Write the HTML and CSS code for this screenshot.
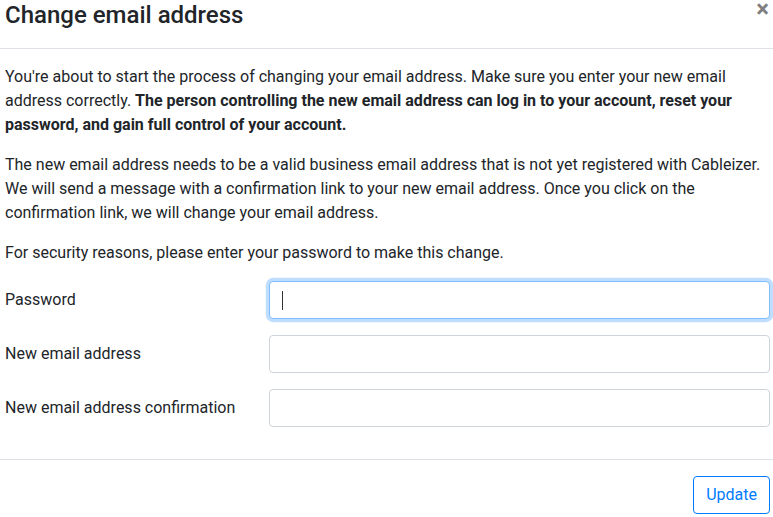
FILE: index.html
```html
<!DOCTYPE html>
<html lang="en">
<head>
<meta charset="utf-8">
<title>Change email address</title>
<link rel="stylesheet" href="styles.css">
</head>
<body>
<div class="modal">
  <div class="modal-header">
    <h4 class="modal-title">Change email address</h4>
    <button class="close" type="button" aria-label="Close">×</button>
  </div>
  <div class="modal-body">
    <p>You're about to start the process of changing your email address. Make sure you enter your new email address correctly. <strong>The person controlling the new email address can log in to your account, reset your password, and gain full control of your account.</strong></p>
    <p>The new email address needs to be a valid business email address that is not yet registered with Cableizer. We will send a message with a confirmation link to your new email address. Once you click on the confirmation link, we will change your email address.</p>
    <p>For security reasons, please enter your password to make this change.</p>
    <div class="form-row">
      <label class="form-label" for="pw">Password</label>
      <div class="field focused"><input class="form-control" id="pw" type="password"></div>
    </div>
    <div class="form-row">
      <label class="form-label" for="em">New email address</label>
      <div class="field"><input class="form-control" id="em" type="email"></div>
    </div>
    <div class="form-row">
      <label class="form-label" for="em2">New email address confirmation</label>
      <div class="field"><input class="form-control" id="em2" type="email"></div>
    </div>
  </div>
  <div class="modal-footer">
    <button class="btn-outline" type="button">Update</button>
  </div>
</div>
</body>
</html>
```
FILE: styles.css
```css
* { box-sizing: border-box; }
html, body { margin: 0; padding: 0; background: #fff; }
body {
  font-family: Roboto, "Liberation Sans", Arial, sans-serif;
  font-size: 16px;
  line-height: 24px;
  color: #212529;
  overflow: hidden;
}
.modal { width: 773px; }
.modal-header {
  height: 49px;
  display: flex;
  align-items: flex-start;
  padding: 0 3px 0 5px;
  border-bottom: 1px solid #dee2e6;
}
.modal-title {
  margin: 1px 0 0 0;
  font-size: 24px;
  font-weight: 500;
  line-height: 28.8px;
  color: #212529;
}
.close {
  margin-left: auto;
  margin-top: 0;
  margin-right: 1px;
  padding: 0;
  height: 18px;
  border: 0;
  background: transparent;
  font-family: Roboto, "Liberation Sans", Arial, sans-serif;
  font-size: 24px;
  font-weight: 700;
  line-height: 18px;
  color: #000;
  opacity: .5;
  cursor: pointer;
}
.modal-body { padding: 16px 3px 16px 5px; }
.modal-body p { margin: 0 0 16px 0; }
.form-row {
  display: grid;
  grid-template-columns: 264px 1fr;
  margin-bottom: 16px;
}
.form-label { padding-top: 7px; padding-bottom: 7px; }
.field { position: relative; }
.form-control {
  display: block;
  width: 100%;
  height: 38px;
  padding: 6px 12px;
  font-family: inherit;
  font-size: 16px;
  line-height: 24px;
  color: #495057;
  background: #fff;
  border: 1px solid #ced4da;
  border-radius: 4px;
  outline: none;
}
.focused .form-control {
  border-color: #80bdff;
  box-shadow: 0 0 0 3.2px rgba(0, 123, 255, .25);
}
.focused::after {
  content: "";
  position: absolute;
  left: 13px;
  top: 10px;
  width: 1px;
  height: 19px;
  background: #333;
}
.modal-footer {
  display: flex;
  justify-content: flex-end;
  padding: 16px 3px 16px 5px;
  border-top: 1px solid #dee2e6;
}
.btn-outline {
  height: 38px;
  padding: 6px 12px;
  font-family: inherit;
  font-size: 16px;
  line-height: 24px;
  color: #007bff;
  background: transparent;
  border: 1px solid #007bff;
  border-radius: 4px;
  cursor: pointer;
}
```
